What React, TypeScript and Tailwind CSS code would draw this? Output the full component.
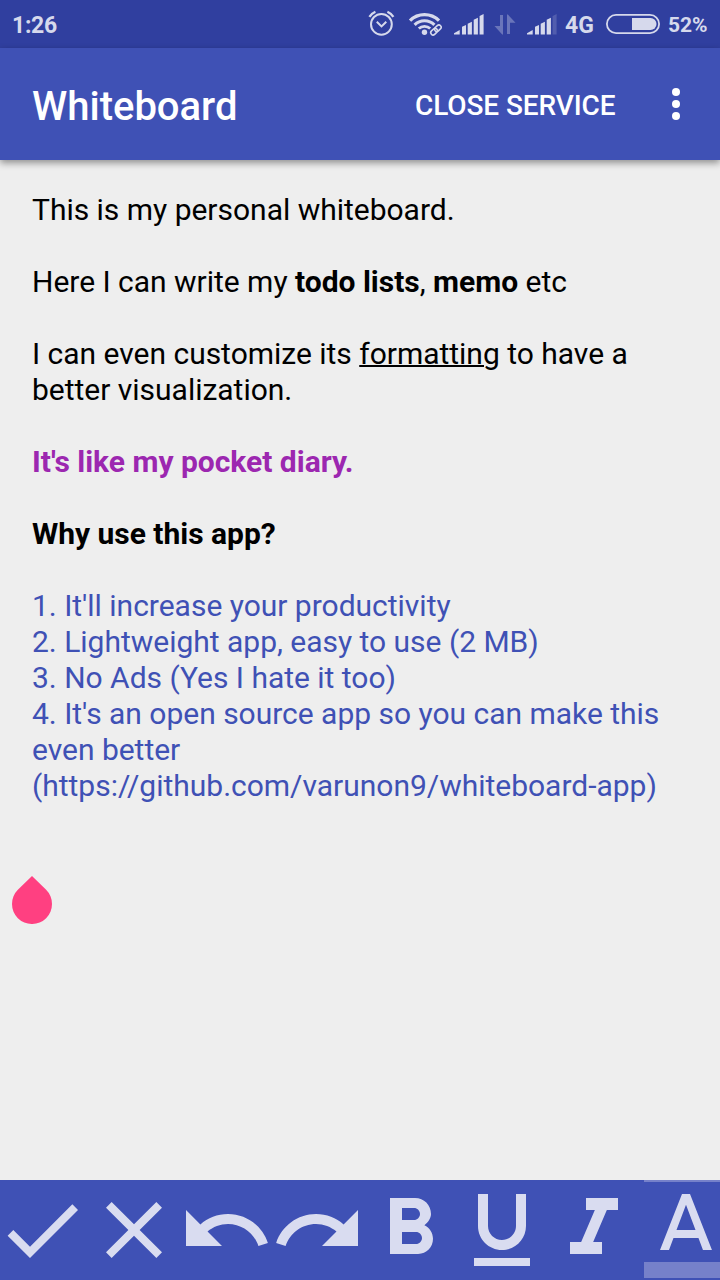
import type { ReactNode } from "react";

function StatusBar() {
  return (
    <div className="flex h-12 shrink-0 items-center bg-[#303f9f] pl-3 text-[#d6d9ec]">
      <span className="w-[356px] pt-[3px] text-[23px] leading-[45px] font-bold tracking-[-0.3px]">1:26</span>
      <svg className="h-12 w-[27px] shrink-0" viewBox="368 0 27 48" fill="none" stroke="currentColor">
        <circle cx="381.4" cy="24.3" r="10.4" strokeWidth="2" />
        <path d="M376.8 21.8l4.7 4.6 4.8-4.6" strokeWidth="2" />
        <path d="M369.4 16.8a14 14 0 0 1 6-5M387.4 11.8a14 14 0 0 1 6 5" strokeWidth="2.3" />
      </svg>
      <svg className="ml-[13px] h-12 w-[34px] shrink-0" viewBox="408 0 34 48" fill="none" stroke="currentColor">
        <path d="M410 20.6a20.5 20.5 0 0 1 29 0" strokeWidth="3.3" />
        <path d="M414.6 24.8a14 14 0 0 1 19.8 0" strokeWidth="3.1" />
        <path d="M418.8 28.6a8.2 8.2 0 0 1 11.4 0" strokeWidth="2.8" />
        <circle cx="424.5" cy="32.2" r="2.7" fill="currentColor" stroke="none" />
        <g strokeWidth="1.6" transform="rotate(-43 436 29.9)">
          <rect x="429.7" y="27.6" width="7.4" height="4.6" rx="2.3" />
          <rect x="434.8" y="27.6" width="7.4" height="4.6" rx="2.3" />
        </g>
      </svg>
      <svg className="ml-[11px] h-12 w-[32px] shrink-0" viewBox="453 0 32 48" fill="currentColor">
        <path d="M454 34.6v-1.4l5.7-3.2v4.6zM462 26.8l4-1.7v9.5h-4zM467.7 23.8l4.2-2v12.8h-4.2zM473.7 19.8l4.2-2v16.8h-4.2zM479.6 16l4-2v20.6h-4z" />
      </svg>
      <svg className="ml-[9px] h-12 w-[24px] shrink-0 opacity-35" viewBox="494 0 24 48" fill="currentColor">
        <path d="M500 15h3v19.5h-.8L494.5 26h5.5zM507 34V14.5h.8l7.7 8.3h-5.5V34z" />
      </svg>
      <svg className="ml-[8px] h-12 w-[32px] shrink-0" viewBox="526 0 32 48" fill="currentColor">
        <path d="M527 34.6v-1.4l5.7-3.2v4.6zM535 26.8l4-1.7v9.5h-4zM540.7 23.8l4.2-2v12.8h-4.2zM546.7 19.8l4.2-2v16.8h-4.2z" />
        <path d="M552.6 16l4-2v20.6h-4z" opacity=".2" />
      </svg>
      <span className="ml-[7px] w-[40px] pt-[3px] text-[23px] leading-[45px] font-bold">4G</span>
      <svg className="h-12 w-[56px] shrink-0" viewBox="605 0 56 48">
        <rect x="606.9" y="14.9" width="52.2" height="18.2" rx="9.1" fill="none" stroke="currentColor" strokeWidth="1.8" />
        <path d="M632 18h18.5a6 6 0 0 1 0 12H632z" fill="currentColor" />
      </svg>
      <span className="ml-[7px] pt-[3px] text-[21px] leading-[45px] font-bold">52%</span>
    </div>
  );
}

function AppBar() {
  return (
    <header className="z-10 flex h-28 shrink-0 items-center bg-[#3f51b5] pl-8 text-white shadow-[0_3px_7px_rgba(0,0,0,0.4)]">
      <h1 className="w-[383px] pt-1.5 text-[40px] leading-[48px] font-medium">Whiteboard</h1>
      <button className="w-[250px] pt-1 text-left text-[28px] leading-9 font-medium tracking-[-0.1px] whitespace-nowrap">CLOSE SERVICE</button>
      <svg className="h-8 w-6" viewBox="0 0 24 32" fill="currentColor">
        <circle cx="11" cy="4" r="4" />
        <circle cx="11" cy="16" r="4" />
        <circle cx="11" cy="28" r="4" />
      </svg>
    </header>
  );
}

function Note() {
  return (
    <main className="flex grow flex-col bg-[#eeeeee] px-8 pt-8 text-[30px] leading-9 tracking-[-0.015px] text-black">
      <p className="mb-9">This is my personal whiteboard.</p>
      <p className="mb-9">
        Here I can write my <b>todo lists</b>, <b>memo</b> etc
      </p>
      <p className="mb-9">
        I can even customize its <u className="decoration-2">formatting</u> to have a<br />
        better visualization.
      </p>
      <p className="mb-9 font-bold text-[#9c27b0]">It's like my pocket diary.</p>
      <p className="mb-9 font-bold">Why use this app?</p>
      <p className="whitespace-nowrap text-[#3f51b5]">
        1. It'll increase your productivity<br />
        2. Lightweight app, easy to use (2 MB)<br />
        3. No Ads (Yes I hate it too)<br />
        4. It's an open source app so you can make this<br />
        even better<br />
        (https://github.com/varunon9/whiteboard-app)
      </p>
      <svg className="mt-[72px] -ml-5 h-12 w-10" viewBox="0 0 40 48" fill="#ff4081">
        <path d="M20 0L34.14 13.86A20 20 0 1 1 5.86 13.86z" />
      </svg>
    </main>
  );
}

function Tool({ children }: { children: ReactNode }) {
  return (
    <svg className="-mr-1 size-24 shrink-0 overflow-visible" viewBox="0 0 24 24" fill="#d9dcf0">
      {children}
    </svg>
  );
}

function Toolbar() {
  return (
    <footer className="h-[100px] shrink-0 overflow-hidden bg-[#3f51b5] pt-0.5">
      <div className="-ml-1.5 flex">
        <Tool><path d="M9 16.17L4.83 12l-1.42 1.41L9 19 21 7l-1.41-1.41z" /></Tool>
        <Tool><path d="M19 6.41L17.59 5 12 10.59 6.41 5 5 6.41 10.59 12 5 17.59 6.41 19 12 13.41 17.59 19 19 17.59 13.41 12z" /></Tool>
        <Tool><path d="M12.5 8c-2.65 0-5.05.99-6.9 2.6L2 7v9h9l-3.62-3.62c1.39-1.16 3.16-1.88 5.12-1.88 3.54 0 6.55 2.31 7.6 5.5l2.37-.78C21.08 11.03 17.15 8 12.5 8z" /></Tool>
        <Tool><path d="M18.4 10.6C16.55 8.99 14.15 8 11.5 8c-4.65 0-8.58 3.03-9.96 7.22L3.9 16c1.05-3.19 4.05-5.5 7.6-5.5 1.95 0 3.73.72 5.12 1.88L13 16h9V7l-3.6 3.6z" /></Tool>
        <Tool><path d="M15.6 10.79c.97-.67 1.65-1.77 1.65-2.79 0-2.26-1.75-4-4-4H7v14h7.04c2.09 0 3.71-1.7 3.71-3.79 0-1.52-.86-2.82-2.15-3.42zM10 6.5h3c.83 0 1.5.67 1.5 1.5s-.67 1.5-1.5 1.5h-3v-3zm3.5 9H10v-3h3.5c.83 0 1.5.67 1.5 1.5s-.67 1.5-1.5 1.5z" /></Tool>
        <Tool><path d="M12 17c3.31 0 6-2.69 6-6V3h-2.5v8c0 1.93-1.57 3.5-3.5 3.5S8.5 12.93 8.5 11V3H6v8c0 3.31 2.69 6 6 6zm-7 2v2h14v-2H5z" /></Tool>
        <Tool><path d="M10 4v3h2.21l-3.42 8H6v3h8v-3h-2.21l3.42-8H18V4z" /></Tool>
        <Tool>
          <path d="M1.5-.5h20V0h-20z" fill="#7681ca" />
          <path d="M1.5 20h20v4h-20z" fill="#7681ca" />
          <path d="M11 3L5.5 17h2.25l1.12-3h6.25l1.12 3h2.25L13 3h-2zm-1.38 9L12 5.67 14.38 12H9.62z" />
        </Tool>
      </div>
    </footer>
  );
}

export default function App() {
  return (
    <div className="flex h-[1280px] w-[720px] flex-col overflow-hidden font-['Roboto',sans-serif]">
      <StatusBar />
      <AppBar />
      <Note />
      <Toolbar />
    </div>
  );
}
